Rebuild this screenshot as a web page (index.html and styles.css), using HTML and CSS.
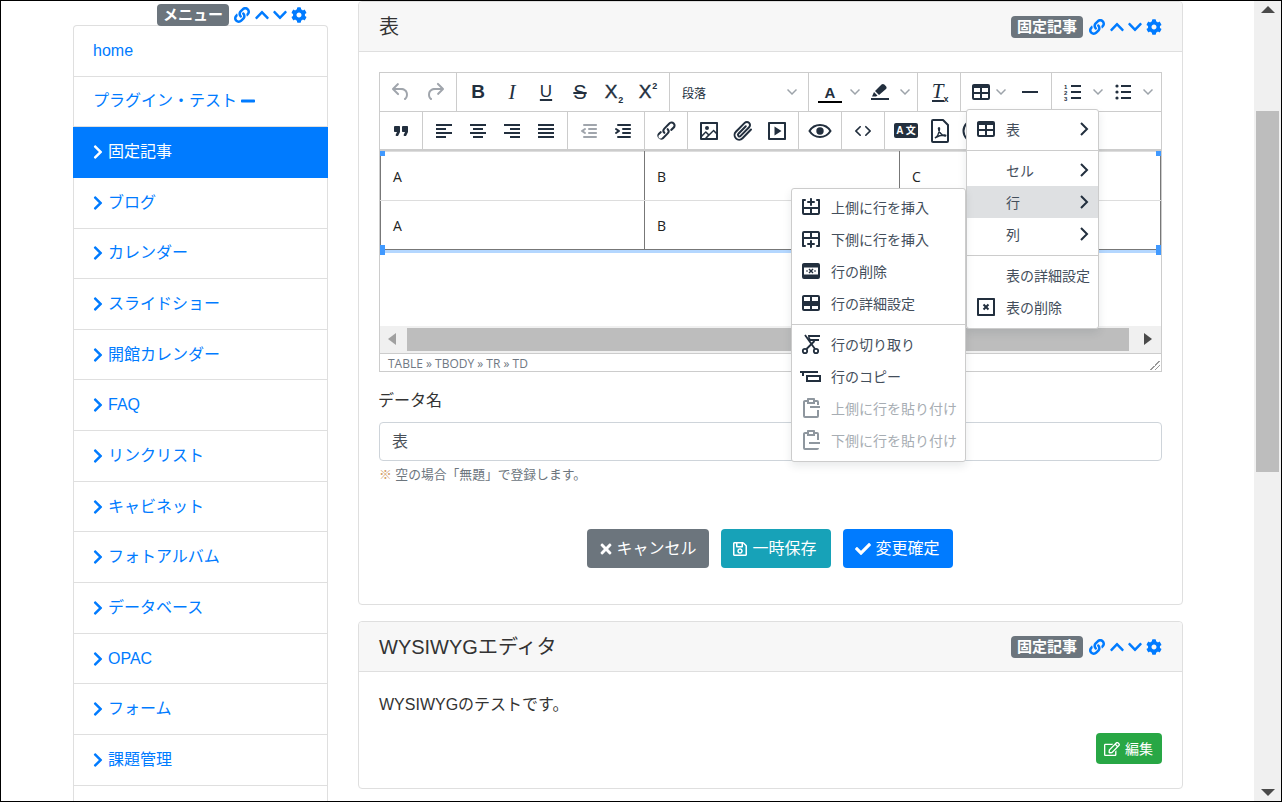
FILE: index.html
```html
<!DOCTYPE html>
<html lang="ja">
<head>
  <meta charset="UTF-8" />
  <title>表</title>
  <link rel="stylesheet" href="styles.css">
</head>
<body>
<svg class="defs" width="0" height="0" aria-hidden="true">
  <defs>
    <symbol id="fa-link" viewBox="0 0 512 512"><path d="M326.612 185.391c59.747 59.809 58.927 155.698.36 214.59-.11.12-.24.25-.36.37l-67.2 67.2c-59.27 59.27-155.699 59.262-214.96 0-59.27-59.26-59.27-155.7 0-214.96l37.106-37.106c9.84-9.84 26.786-3.3 27.294 10.606.648 17.722 3.826 35.527 9.69 52.721 1.986 5.822.567 12.262-3.783 16.612l-13.087 13.087c-28.026 28.026-28.905 73.66-1.155 101.96 28.024 28.579 74.086 28.749 102.325.51l67.2-67.19c28.191-28.191 28.073-73.757 0-101.83-3.701-3.694-7.429-6.564-10.341-8.569a16.037 16.037 0 0 1-6.947-12.606c-.396-10.567 3.348-21.456 11.698-29.806l21.054-21.055c5.521-5.521 14.182-6.199 20.584-1.731a152.482 152.482 0 0 1 20.522 17.197zM467.547 44.449c-59.261-59.262-155.69-59.27-214.96 0l-67.2 67.2c-.12.12-.25.25-.36.37-58.566 58.892-59.387 154.781.36 214.59a152.454 152.454 0 0 0 20.521 17.196c6.402 4.468 15.064 3.789 20.584-1.731l21.054-21.055c8.35-8.35 12.094-19.239 11.698-29.806a16.037 16.037 0 0 0-6.947-12.606c-2.912-2.005-6.64-4.875-10.341-8.569-28.073-28.073-28.191-73.639 0-101.83l67.2-67.19c28.239-28.239 74.3-28.069 102.325.51 27.75 28.3 26.872 73.934-1.155 101.96l-13.087 13.087c-4.35 4.35-5.769 10.79-3.783 16.612 5.864 17.194 9.042 34.999 9.69 52.721.509 13.906 17.454 20.446 27.294 10.606l37.106-37.106c59.271-59.259 59.271-155.699.001-214.959z"/></symbol>
    <symbol id="fa-up" viewBox="0 0 448 512"><path d="M240.971 130.524l194.343 194.343c9.373 9.373 9.373 24.569 0 33.941l-22.667 22.667c-9.357 9.357-24.522 9.375-33.901.04L224 227.495 69.255 381.516c-9.379 9.335-24.544 9.317-33.901-.04l-22.667-22.667c-9.373-9.373-9.373-24.569 0-33.941L207.03 130.525c9.372-9.373 24.568-9.373 33.941-.001z"/></symbol>
    <symbol id="fa-down" viewBox="0 0 448 512"><path d="M207.029 381.476L12.686 187.132c-9.373-9.373-9.373-24.569 0-33.941l22.667-22.667c9.357-9.357 24.522-9.375 33.901-.04L224 284.505l154.745-154.021c9.379-9.335 24.544-9.317 33.901.04l22.667 22.667c9.373 9.373 9.373 24.569 0 33.941L240.971 381.476c-9.373 9.372-24.569 9.372-33.942 0z"/></symbol>
    <symbol id="fa-right" viewBox="0 0 320 512"><path d="M285.476 272.971L91.132 467.314c-9.373 9.373-24.569 9.373-33.941 0l-22.667-22.667c-9.357-9.357-9.375-24.522-.04-33.901L188.505 256 34.484 101.255c-9.335-9.379-9.317-24.544.04-33.901l22.667-22.667c9.373-9.373 24.569-9.373 33.941 0L285.475 239.03c9.373 9.372 9.373 24.568.001 33.941z"/></symbol>
    <symbol id="fa-cog" viewBox="0 0 512 512"><path d="M487.4 315.7l-42.6-24.6c4.3-23.2 4.3-47 0-70.2l42.6-24.6c4.9-2.8 7.1-8.6 5.5-14-11.1-35.6-30-67.8-54.7-94.6-3.8-4.1-10-5.1-14.8-2.3L380.8 110c-17.9-15.4-38.5-27.3-60.8-35.1V25.8c0-5.6-3.9-10.5-9.4-11.7-36.7-8.2-74.3-7.8-109.2 0-5.5 1.2-9.4 6.1-9.4 11.7V75c-22.2 7.9-42.8 19.8-60.8 35.1L88.7 85.5c-4.9-2.8-11-1.9-14.8 2.3-24.7 26.7-43.6 58.9-54.7 94.6-1.7 5.4.6 11.2 5.5 14L67.3 221c-4.3 23.2-4.3 47 0 70.2l-42.6 24.6c-4.9 2.8-7.1 8.6-5.5 14 11.1 35.6 30 67.8 54.7 94.6 3.8 4.1 10 5.1 14.8 2.3l42.6-24.6c17.9 15.4 38.5 27.3 60.8 35.1v49.2c0 5.6 3.9 10.5 9.4 11.7 36.7 8.2 74.3 7.8 109.2 0 5.5-1.2 9.4-6.1 9.4-11.7v-49.2c22.2-7.9 42.8-19.8 60.8-35.1l42.6 24.6c4.9 2.8 11 1.9 14.8-2.3 24.7-26.7 43.6-58.9 54.7-94.6 1.5-5.5-.7-11.3-5.6-14.1zM256 336c-44.1 0-80-35.9-80-80s35.9-80 80-80 80 35.9 80 80-35.9 80-80 80z"/></symbol>
    <symbol id="fa-minus" viewBox="0 0 448 512"><path d="M416 208H32c-17.67 0-32 14.33-32 32v32c0 17.67 14.33 32 32 32h384c17.67 0 32-14.33 32-32v-32c0-17.67-14.33-32-32-32z"/></symbol>
    <symbol id="fa-times" viewBox="0 0 352 512"><path d="M242.72 256l100.07-100.07c12.28-12.28 12.28-32.19 0-44.48l-22.24-22.24c-12.28-12.28-32.19-12.28-44.48 0L176 189.28 75.93 89.21c-12.28-12.28-32.19-12.28-44.48 0L9.21 111.45c-12.28 12.28-12.28 32.19 0 44.48L109.28 256 9.21 356.07c-12.28 12.28-12.28 32.19 0 44.48l22.24 22.24c12.28 12.28 32.2 12.28 44.48 0L176 322.72l100.07 100.07c12.28 12.28 32.2 12.28 44.48 0l22.24-22.24c12.28-12.28 12.28-32.19 0-44.48L242.72 256z"/></symbol>
    <symbol id="fa-check" viewBox="0 0 512 512"><path d="M173.898 439.404l-166.4-166.4c-9.997-9.997-9.997-26.206 0-36.204l36.203-36.204c9.997-9.998 26.207-9.998 36.204 0L192 312.69 432.095 72.596c9.997-9.997 26.207-9.997 36.204 0l36.203 36.204c9.997 9.997 9.997 26.206 0 36.204l-294.4 294.401c-9.998 9.997-26.207 9.997-36.204-.001z"/></symbol>
    <symbol id="fa-save" viewBox="0 0 448 512"><path d="M433.941 129.941l-83.882-83.882A48 48 0 0 0 316.118 32H48C21.49 32 0 53.49 0 80v352c0 26.51 21.49 48 48 48h352c26.51 0 48-21.49 48-48V163.882a48 48 0 0 0-14.059-33.941zM272 80v80H144V80h128zm122 352H54a6 6 0 0 1-6-6V86a6 6 0 0 1 6-6h42v104c0 13.255 10.745 24 24 24h176c13.255 0 24-10.745 24-24V83.882l78.243 78.243a6 6 0 0 1 1.757 4.243V426a6 6 0 0 1-6 6zM224 232c-48.523 0-88 39.477-88 88s39.477 88 88 88 88-39.477 88-88-39.477-88-88-88zm0 128c-22.056 0-40-17.944-40-40s17.944-40 40-40 40 17.944 40 40-17.944 40-40 40z"/></symbol>
    <symbol id="fa-edit" viewBox="0 0 576 512"><path d="M402.3 344.9l32-32c5-5 13.7-1.5 13.7 5.7V464c0 26.5-21.5 48-48 48H48c-26.5 0-48-21.5-48-48V112c0-26.5 21.5-48 48-48h273.5c7.1 0 10.7 8.6 5.7 13.7l-32 32c-1.5 1.5-3.5 2.3-5.7 2.3H48v352h352V350.5c0-2.1.8-4.1 2.3-5.6zm156.6-201.8L296.3 405.7l-90.4 10c-26.2 2.9-48.5-19.2-45.6-45.6l10-90.4L432.9 17.1c22.9-22.9 59.9-22.9 82.7 0l43.2 43.2c22.9 22.9 22.9 60 .1 82.8zM460.1 174L402 115.9 216.2 301.8l-7.3 65.3 65.3-7.3L460.1 174zm64.8-79.7l-43.2-43.2c-4.1-4.1-10.8-4.1-14.8 0L436 82l58.1 58.1 30.9-30.9c4-4.2 4-10.8-.1-14.9z"/></symbol>

    <symbol id="mce-undo" viewBox="0 0 24 24"><path d="M6.4 8H12c3.7 0 6.2 2 6.8 5.1.6 2.7-.4 5.6-2.3 6.8a1 1 0 0 1-1-1.8c1.1-.6 1.8-2.7 1.4-4.6-.5-2.1-2.1-3.5-4.9-3.5H6.4l3.3 3.3a1 1 0 1 1-1.4 1.4l-5-5a1 1 0 0 1 0-1.4l5-5a1 1 0 0 1 1.4 1.4L6.4 8z"/></symbol>
    <symbol id="mce-redo" viewBox="0 0 24 24"><path d="M17.6 10H12c-2.8 0-4.4 1.4-4.9 3.5-.4 2 .3 4 1.4 4.6a1 1 0 1 1-1 1.8c-2-1.2-2.9-4.1-2.3-6.8.6-3 3-5.1 6.8-5.1h5.6l-3.3-3.3a1 1 0 1 1 1.4-1.4l5 5a1 1 0 0 1 0 1.4l-5 5a1 1 0 0 1-1.4-1.4l3.3-3.3z"/></symbol>
    <symbol id="mce-quote" viewBox="0 0 24 24"><path d="M7.5 17h.9c.4 0 .7-.2.9-.6L11 13V8c0-.6-.4-1-1-1H6a1 1 0 0 0-1 1v4c0 .6.4 1 1 1h2l-1.3 2.7a1 1 0 0 0 .8 1.3zm8 0h.9c.4 0 .7-.2.9-.6L19 13V8c0-.6-.4-1-1-1h-4a1 1 0 0 0-1 1v4c0 .6.4 1 1 1h2l-1.3 2.7a1 1 0 0 0 .8 1.3z"/></symbol>
    <symbol id="mce-left" viewBox="0 0 24 24"><path d="M4 5h16v2H4zM4 9h10v2H4zM4 13h16v2H4zM4 17h10v2H4z"/></symbol>
    <symbol id="mce-center" viewBox="0 0 24 24"><path d="M4 5h16v2H4zM7 9h10v2H7zM4 13h16v2H4zM7 17h10v2H7z"/></symbol>
    <symbol id="mce-right" viewBox="0 0 24 24"><path d="M4 5h16v2H4zM10 9h10v2H10zM4 13h16v2H4zM10 17h10v2H10z"/></symbol>
    <symbol id="mce-justify" viewBox="0 0 24 24"><path d="M4 5h16v2H4zM4 9h16v2H4zM4 13h16v2H4zM4 17h16v2H4z"/></symbol>
    <symbol id="mce-outdent" viewBox="0 0 24 24"><path d="M7 5h12c.6 0 1 .4 1 1s-.4 1-1 1H7a1 1 0 1 1 0-2zm5 4h7c.6 0 1 .4 1 1s-.4 1-1 1h-7a1 1 0 0 1 0-2zm0 4h7c.6 0 1 .4 1 1s-.4 1-1 1h-7a1 1 0 0 1 0-2zm-5 4h12a1 1 0 0 1 0 2H7a1 1 0 0 1 0-2zm1.6-3.8a1 1 0 0 1-1.2 1.6l-3-2a1 1 0 0 1 0-1.6l3-2a1 1 0 0 1 1.2 1.6L6.8 12l1.8 1.2z"/></symbol>
    <symbol id="mce-indent" viewBox="0 0 24 24"><path d="M7 5h12c.6 0 1 .4 1 1s-.4 1-1 1H7a1 1 0 1 1 0-2zm5 4h7c.6 0 1 .4 1 1s-.4 1-1 1h-7a1 1 0 0 1 0-2zm0 4h7c.6 0 1 .4 1 1s-.4 1-1 1h-7a1 1 0 0 1 0-2zm-5 4h12a1 1 0 0 1 0 2H7a1 1 0 0 1 0-2zm-2.6-3.8L6.2 12l-1.8-1.2a1 1 0 0 1 1.2-1.6l3 2a1 1 0 0 1 0 1.6l-3 2a1 1 0 1 1-1.2-1.6z"/></symbol>
    <symbol id="mce-link" viewBox="0 0 24 24"><path d="M6.2 12.3a1 1 0 0 1 1.4 1.4l-2.1 2.1a2 2 0 1 0 2.7 2.7l4.8-4.8a2 2 0 0 0 0-2.8 1 1 0 1 1 1.4-1.4 4 4 0 0 1 0 5.6l-4.8 4.8a4 4 0 0 1-5.5-5.6l2.1-2zm11.6-.6a1 1 0 0 1-1.4-1.4l2-2a2 2 0 1 0-2.6-2.8L11 10.3a2 2 0 0 0 0 2.8 1 1 0 1 1-1.4 1.4 4 4 0 0 1 0-5.6l4.8-4.8a4 4 0 1 1 5.6 5.6l-2.1 2z"/></symbol>
    <symbol id="mce-image" viewBox="0 0 24 24"><path fill-rule="evenodd" d="M5 15.7l3.3-3.2c.3-.3.7-.3 1 0L12 15l4.1-4c.3-.4.8-.4 1 0l2 1.9V5H5v10.7zM5 18v1h3l2.8-2.9-2-2L5 18zm14-3l-2.5-2.4-6.4 6.4H19v-4zM4 3h16c.6 0 1 .4 1 1v16c0 .6-.4 1-1 1H4a1 1 0 0 1-1-1V4c0-.6.4-1 1-1zm6 8a2 2 0 1 0 0-4 2 2 0 0 0 0 4z"/></symbol>
    <symbol id="mce-clip" viewBox="0 0 24 24"><path fill="none" stroke="currentColor" stroke-width="2" stroke-linecap="round" d="M20 10.5l-8.500 8.800a4.600 4.600 0 0 1-6.600-6.500l8.800-8.900a3.100 3.100 0 0 1 4.400 4.400l-8.500 8.600a1.500 1.500 0 0 1-2.200-2.100l7.400-7.500"/></symbol>
    <symbol id="mce-media" viewBox="0 0 24 24"><path fill-rule="evenodd" d="M4 3h16c.6 0 1 .4 1 1v16c0 .6-.4 1-1 1H4a1 1 0 0 1-1-1V4c0-.6.4-1 1-1zm1 2v14h14V5H5zm4.500 2.500l7 4.500-7 4.500v-9z"/></symbol>
    <symbol id="mce-eye" viewBox="0 0 24 24"><path fill="none" stroke="currentColor" stroke-width="2" d="M1.500 12C4 8 8 6 12 6s8 2 10.500 6C20 16 16 18 12 18s-8-2-10.500-6z"/><circle cx="12" cy="12" r="3.700"/></symbol>
    <symbol id="mce-code" viewBox="0 0 24 24"><path d="M9.800 15.700c.3.300.3.800 0 1-.3.400-.9.400-1.200 0l-4.400-4.100a.8.800 0 0 1 0-1.200l4.400-4.200c.3-.3.900-.3 1.200 0 .3.300.3.800 0 1.100L6 12l3.800 3.700zM14.200 15.700c-.3.300-.3.800 0 1 .4.400.9.400 1.200 0l4.400-4.100c.3-.3.300-.9 0-1.200l-4.400-4.200a.8.800 0 0 0-1.200 0c-.3.300-.3.800 0 1.100L18 12l-3.800 3.700z"/></symbol>
    <symbol id="mce-pdf" viewBox="0 0 24 24"><path fill="none" stroke="currentColor" stroke-width="2" stroke-linejoin="round" d="M5 1h10l5 5v16a1 1 0 0 1-1 1H5a1 1 0 0 1-1-1V2a1 1 0 0 1 1-1z"/><path fill="none" stroke="currentColor" stroke-width="1.500" d="M7 19c2-1 4-5 4.500-9 .2-1.500-1-1.500-1-.5 0 3 3 7 6.500 7.500 1 .1 1-1 0-1-3-.2-7 1-10 3z"/></symbol>
    <symbol id="mce-circle" viewBox="0 0 24 24"><circle cx="12" cy="12" r="10.500" fill="none" stroke="currentColor" stroke-width="2"/></symbol>
    <symbol id="mce-table" viewBox="0 0 24 24"><path d="M19 4a2 2 0 0 1 2 2v12a2 2 0 0 1-2 2H5a2 2 0 0 1-2-2V6c0-1.100.9-2 2-2h14zM5 14v4h6v-4H5zm14 0h-6v4h6v-4zm0-6h-6v4h6V8zM5 12h6V8H5v4z"/></symbol>
    <symbol id="mce-hr" viewBox="0 0 24 24"><path d="M4 11h16v2H4z"/></symbol>
    <symbol id="mce-bullist" viewBox="0 0 24 24"><path d="M10 5h10v2H10zM10 11h10v2H10zM10 17h10v2H10z"/><circle cx="6" cy="6" r="1.600"/><circle cx="6" cy="12" r="1.600"/><circle cx="6" cy="18" r="1.600"/></symbol>
    <symbol id="mce-numbars" viewBox="0 0 24 24"><path d="M10 5h10v2H10zM10 11h10v2H10zM10 17h10v2H10z"/></symbol>
    <symbol id="mce-marker" viewBox="0 0 24 24"><path d="M3 18h18v2H3zM4 16.500l2-4.500 3.500 3.500-1.500 1zM7 11l6.500-6.500c.8-.8 2-.8 2.800 0l1.700 1.700c.8.800.8 2 0 2.800L11 15z"/></symbol>
    <symbol id="mce-rowabove" viewBox="0 0 24 24"><path d="M6 4a1 1 0 1 1 0 2H5v6h14V6h-1a1 1 0 0 1 0-2h2c.6 0 1 .4 1 1v13a2 2 0 0 1-1.700 2H5a2 2 0 0 1-2-2V5c0-.6.4-1 1-1h2zm5 10H5v4h6v-4zm8 0h-6v4h6v-4zM12 3c.5 0 1 .4 1 .9V6h2a1 1 0 0 1 0 2h-2v2a1 1 0 0 1-2 .1V8H9a1 1 0 0 1 0-2h2V4c0-.6.4-1 1-1z"/></symbol>
    <symbol id="mce-rowbelow" viewBox="0 0 24 24"><path transform="matrix(1 0 0 -1 0 24)" d="M6 4a1 1 0 1 1 0 2H5v6h14V6h-1a1 1 0 0 1 0-2h2c.6 0 1 .4 1 1v13a2 2 0 0 1-1.700 2H5a2 2 0 0 1-2-2V5c0-.6.4-1 1-1h2zm5 10H5v4h6v-4zm8 0h-6v4h6v-4zM12 3c.5 0 1 .4 1 .9V6h2a1 1 0 0 1 0 2h-2v2a1 1 0 0 1-2 .1V8H9a1 1 0 0 1 0-2h2V4c0-.6.4-1 1-1z"/></symbol>
    <symbol id="mce-rowdel" viewBox="0 0 24 24"><path fill-rule="evenodd" d="M5 4h14a2 2 0 0 1 2 2v12a2 2 0 0 1-2 2H5a2 2 0 0 1-2-2V6c0-1.100.9-2 2-2zm0 4.500v7h14v-7H5zm2 3h2v1H7zm8 0h2v1h-2z"/><path d="M10.500 9.500L12 11l1.500-1.500 1 1L13 12l1.500 1.500-1 1L12 13l-1.500 1.500-1-1L11 12l-1.500-1.500z"/></symbol>
    <symbol id="mce-rowprops" viewBox="0 0 24 24"><path fill-rule="evenodd" d="M5 4h14a2 2 0 0 1 2 2v12a2 2 0 0 1-2 2H5a2 2 0 0 1-2-2V6c0-1.100.9-2 2-2zm0 2v4h6V6H5zm8 0v4h6V6h-6zM5 15v3h6v-3H5zm8 0v3h6v-3h-6z"/></symbol>
    <symbol id="mce-cut" viewBox="0 0 24 24"><path d="M9 3h12v2H10.500l1 2H20v2H9.500L9 3z"/><path fill="none" stroke="currentColor" stroke-width="1.800" d="M6 3l10 14M15.500 9L7.500 17"/><circle cx="6" cy="19" r="2.200" fill="none" stroke="currentColor" stroke-width="1.800"/><circle cx="17" cy="19" r="2.200" fill="none" stroke="currentColor" stroke-width="1.800"/></symbol>
    <symbol id="mce-copyrow" viewBox="0 0 24 24"><path fill-rule="evenodd" d="M1 7h18v2H5v3H3V9H1V7zm6 4h15v7H7v-7zm2 2v3h11v-3H9z"/></symbol>
    <symbol id="mce-pasteup" viewBox="0 0 24 24"><path fill-rule="evenodd" d="M9 2h6c.6 0 1 .4 1 1v1h2a2 2 0 0 1 2 2v3h-2V6h-2v2H8V6H6v14h12v-6h2v6a2 2 0 0 1-2 2H6a2 2 0 0 1-2-2V6c0-1.100.9-2 2-2h2V3c0-.6.4-1 1-1zm1 2v2h4V4h-4zM11 10h10v2H11z"/></symbol>
    <symbol id="mce-pastedown" viewBox="0 0 24 24"><path fill-rule="evenodd" d="M9 2h6c.6 0 1 .4 1 1v1h2a2 2 0 0 1 2 2v6h-2V6h-2v2H8V6H6v14h14a2 2 0 0 1-2 2H6a2 2 0 0 1-2-2V6c0-1.100.9-2 2-2h2V3c0-.6.4-1 1-1zm1 2v2h4V4h-4zM10 14h11v2H10z"/></symbol>
    <symbol id="mce-tabledel" viewBox="0 0 24 24"><path fill-rule="evenodd" d="M4 3h16c.6 0 1 .4 1 1v16c0 .6-.4 1-1 1H4a1 1 0 0 1-1-1V4c0-.6.4-1 1-1zm1 2v14h14V5H5zm7 5.600l1.800-1.800 1.400 1.400-1.800 1.800 1.800 1.800-1.400 1.400-1.800-1.800-1.800 1.800-1.400-1.400 1.800-1.800-1.800-1.800 1.400-1.400 1.800 1.800z"/></symbol>
    <symbol id="mce-chev" viewBox="0 0 10 10"><path d="M.5 2.500L5 7l4.500-4.500" fill="none" stroke="currentColor" stroke-width="1.500"/></symbol>
    <symbol id="mce-next" viewBox="0 0 10 16"><path d="M2 2l6 6-6 6" fill="none" stroke="currentColor" stroke-width="2"/></symbol>
  </defs>
</svg>

<div class="window">
  <div class="page">
    <aside class="side">
      <div class="frame-head">
        <span class="badge">メニュー</span>
        <span class="ctrl">
          <svg class="fa c-link"><use href="#fa-link"/></svg>
          <svg class="fa c-up"><use href="#fa-up"/></svg>
          <svg class="fa c-up"><use href="#fa-down"/></svg>
          <svg class="fa c-cog"><use href="#fa-cog"/></svg>
        </span>
      </div>
      <nav class="menu-list">
        <a class="menu-item">home</a>
        <a class="menu-item">プラグイン・テスト<svg class="fa minus"><use href="#fa-minus"/></svg></a>
        <a class="menu-item active"><svg class="fa chev"><use href="#fa-right"/></svg>固定記事</a>
        <a class="menu-item"><svg class="fa chev"><use href="#fa-right"/></svg>ブログ</a>
        <a class="menu-item"><svg class="fa chev"><use href="#fa-right"/></svg>カレンダー</a>
        <a class="menu-item"><svg class="fa chev"><use href="#fa-right"/></svg>スライドショー</a>
        <a class="menu-item"><svg class="fa chev"><use href="#fa-right"/></svg>開館カレンダー</a>
        <a class="menu-item"><svg class="fa chev"><use href="#fa-right"/></svg>FAQ</a>
        <a class="menu-item"><svg class="fa chev"><use href="#fa-right"/></svg>リンクリスト</a>
        <a class="menu-item"><svg class="fa chev"><use href="#fa-right"/></svg>キャビネット</a>
        <a class="menu-item"><svg class="fa chev"><use href="#fa-right"/></svg>フォトアルバム</a>
        <a class="menu-item"><svg class="fa chev"><use href="#fa-right"/></svg>データベース</a>
        <a class="menu-item"><svg class="fa chev"><use href="#fa-right"/></svg>OPAC</a>
        <a class="menu-item"><svg class="fa chev"><use href="#fa-right"/></svg>フォーム</a>
        <a class="menu-item"><svg class="fa chev"><use href="#fa-right"/></svg>課題管理</a>
        <a class="menu-item"></a>
      </nav>
    </aside>

    <main class="content">
      <section class="card first">
        <header class="card-head">
          <h5>表</h5>
          <span class="badge">固定記事</span>
          <span class="ctrl">
            <svg class="fa c-link"><use href="#fa-link"/></svg>
            <svg class="fa c-up"><use href="#fa-up"/></svg>
            <svg class="fa c-up"><use href="#fa-down"/></svg>
            <svg class="fa c-cog"><use href="#fa-cog"/></svg>
          </span>
        </header>
        <div class="card-body">
          <div class="editor">
            <div class="tb-row">
              <div class="tb-group">
                <span class="tb off"><svg><use href="#mce-undo"/></svg></span>
                <span class="tb off"><svg><use href="#mce-redo"/></svg></span>
              </div>
              <div class="tb-group">
                <span class="tb"><b class="g-b">B</b></span>
                <span class="tb"><i class="g-i">I</i></span>
                <span class="tb"><u class="g-u">U</u></span>
                <span class="tb"><s class="g-s">S</s></span>
                <span class="tb"><span class="g-x">X<sub>2</sub></span></span>
                <span class="tb"><span class="g-x">X<sup>2</sup></span></span>
              </div>
              <div class="tb-group">
                <span class="tb-select">段落<svg class="arrow"><use href="#mce-chev"/></svg></span>
              </div>
              <div class="tb-group">
                <span class="tb split"><span class="g-color">A</span><svg class="arrow"><use href="#mce-chev"/></svg></span>
                <span class="tb split"><svg><use href="#mce-marker"/></svg><svg class="arrow"><use href="#mce-chev"/></svg></span>
              </div>
              <div class="tb-group">
                <span class="tb"><span class="g-clear">T<small>x</small></span></span>
              </div>
              <div class="tb-group">
                <span class="tb split narrow"><svg><use href="#mce-table"/></svg><svg class="arrow"><use href="#mce-chev"/></svg></span>
                <span class="tb"><svg><use href="#mce-hr"/></svg></span>
              </div>
              <div class="tb-group last">
                <span class="tb split"><span class="g-num"><svg><use href="#mce-numbars"/></svg><small>1<br>2<br>3</small></span><svg class="arrow"><use href="#mce-chev"/></svg></span>
                <span class="tb split"><svg><use href="#mce-bullist"/></svg><svg class="arrow"><use href="#mce-chev"/></svg></span>
              </div>
            </div>
            <div class="tb-row second">
              <div class="tb-group">
                <span class="tb"><svg><use href="#mce-quote"/></svg></span>
              </div>
              <div class="tb-group">
                <span class="tb"><svg><use href="#mce-left"/></svg></span>
                <span class="tb"><svg><use href="#mce-center"/></svg></span>
                <span class="tb"><svg><use href="#mce-right"/></svg></span>
                <span class="tb"><svg><use href="#mce-justify"/></svg></span>
              </div>
              <div class="tb-group">
                <span class="tb off"><svg><use href="#mce-outdent"/></svg></span>
                <span class="tb"><svg><use href="#mce-indent"/></svg></span>
              </div>
              <div class="tb-group">
                <span class="tb"><svg><use href="#mce-link"/></svg></span>
              </div>
              <div class="tb-group">
                <span class="tb"><svg><use href="#mce-image"/></svg></span>
                <span class="tb"><svg><use href="#mce-clip"/></svg></span>
                <span class="tb"><svg><use href="#mce-media"/></svg></span>
              </div>
              <div class="tb-group">
                <span class="tb"><svg><use href="#mce-eye"/></svg></span>
              </div>
              <div class="tb-group">
                <span class="tb"><svg><use href="#mce-code"/></svg></span>
              </div>
              <div class="tb-group last">
                <span class="tb"><span class="g-trans">A 文</span></span>
                <span class="tb"><svg><use href="#mce-pdf"/></svg></span>
                <span class="tb"><svg><use href="#mce-circle"/></svg></span>
              </div>
            </div>

            <div class="edit-area">
              <table class="edit-table">
                <tr><td>A</td><td>B</td><td>C</td></tr>
                <tr><td>A</td><td>B</td><td></td></tr>
              </table>
              <div class="table-sel"></div>
              <span class="handle tl"></span>
              <span class="handle tr"></span>
              <span class="handle bl"></span>
              <span class="handle br"></span>
            </div>
            <div class="hscroll">
              <span class="tri-left"></span>
              <span class="hthumb"></span>
              <span class="tri-right"></span>
            </div>
            <div class="statusbar">
              <span>TABLE » TBODY » TR » TD</span>
              <span class="grip"></span>
            </div>
          </div>

          <label class="field-label">データ名</label>
          <div class="field-input">表</div>
          <p class="field-note"><span class="mark">※</span> 空の場合「無題」で登録します。</p>

          <div class="actions">
            <a class="btn gray"><svg class="fa"><use href="#fa-times"/></svg>キャンセル</a>
            <a class="btn teal"><svg class="fa"><use href="#fa-save"/></svg>一時保存</a>
            <a class="btn blue"><svg class="fa"><use href="#fa-check"/></svg>変更確定</a>
          </div>
        </div>
      </section>

      <section class="card second">
        <header class="card-head">
          <h5>WYSIWYGエディタ</h5>
          <span class="badge">固定記事</span>
          <span class="ctrl">
            <svg class="fa c-link"><use href="#fa-link"/></svg>
            <svg class="fa c-up"><use href="#fa-up"/></svg>
            <svg class="fa c-up"><use href="#fa-down"/></svg>
            <svg class="fa c-cog"><use href="#fa-cog"/></svg>
          </span>
        </header>
        <div class="card-body small">
          <p class="wys">WYSIWYGのテストです。</p>
          <div class="edit-row"><a class="btn green"><svg class="fa"><use href="#fa-edit"/></svg>編集</a></div>
        </div>
      </section>
    </main>
  </div>

  <div class="vscroll">
    <span class="tri-up"></span>
    <span class="vthumb"></span>
    <span class="tri-down"></span>
  </div>

  <!-- table dropdown, open on 行 -->
  <div class="mce-menu table-menu">
    <div class="mi"><svg class="mi-ico"><use href="#mce-table"/></svg>表<svg class="mi-next"><use href="#mce-next"/></svg></div>
    <hr>
    <div class="mi"><span class="mi-ico"></span>セル<svg class="mi-next"><use href="#mce-next"/></svg></div>
    <div class="mi on"><span class="mi-ico"></span>行<svg class="mi-next"><use href="#mce-next"/></svg></div>
    <div class="mi"><span class="mi-ico"></span>列<svg class="mi-next"><use href="#mce-next"/></svg></div>
    <hr>
    <div class="mi"><span class="mi-ico"></span>表の詳細設定</div>
    <div class="mi"><svg class="mi-ico"><use href="#mce-tabledel"/></svg>表の削除</div>
  </div>
  <div class="mce-menu row-menu">
    <div class="mi"><svg class="mi-ico"><use href="#mce-rowabove"/></svg>上側に行を挿入</div>
    <div class="mi"><svg class="mi-ico"><use href="#mce-rowbelow"/></svg>下側に行を挿入</div>
    <div class="mi"><svg class="mi-ico"><use href="#mce-rowdel"/></svg>行の削除</div>
    <div class="mi"><svg class="mi-ico"><use href="#mce-rowprops"/></svg>行の詳細設定</div>
    <hr>
    <div class="mi"><svg class="mi-ico"><use href="#mce-cut"/></svg>行の切り取り</div>
    <div class="mi"><svg class="mi-ico"><use href="#mce-copyrow"/></svg>行のコピー</div>
    <div class="mi off"><svg class="mi-ico"><use href="#mce-pasteup"/></svg>上側に行を貼り付け</div>
    <div class="mi off"><svg class="mi-ico"><use href="#mce-pastedown"/></svg>下側に行を貼り付け</div>
  </div>
</div>
</body>
</html>
```

FILE: styles.css
```css
* {
  box-sizing: border-box;
}
html, body {
  margin: 0;
  padding: 0;
  overflow: hidden;
}
body {
  font-family: "Liberation Sans", "Noto Sans CJK JP", sans-serif;
  font-size: 16px;
  color: #333;
  background: #fff;
}
.defs {
  position: absolute;
}
.window {
  position: relative;
  width: 1282px;
  height: 802px;
  border: 1px solid #000;
  display: flex;
  overflow: hidden;
}
.page {
  flex: 1;
  min-width: 0;
  display: flex;
  gap: 30px;
  padding-left: 72px;
}
.fa {
  fill: #007bff;
  display: inline-block;
}

/* frame header (badge + controls) */
.badge {
  display: inline-block;
  background: #6c757d;
  color: #fff;
  font-size: 15px;
  font-weight: 700;
  line-height: 15px;
  height: 22px;
  padding: 3px 6px;
  border-radius: 4px;
  white-space: nowrap;
}
.ctrl {
  display: inline-flex;
  align-items: center;
  gap: 4px;
  margin-left: 6px;
}
.ctrl svg {
  height: 16px;
}
.c-link {
  width: 16px;
  margin-right: 1px;
}
.c-up {
  width: 14px;
}
.c-cog {
  width: 16px;
}

/* left menu */
.side {
  width: 255px;
  flex: none;
}
.frame-head {
  height: 24px;
  padding: 3px 21px 0 0;
  display: flex;
  justify-content: flex-end;
  align-items: flex-start;
}
.frame-head .ctrl {
  height: 22px;
  margin-left: 5px;
}
.menu-list {
  border: 1px solid #dfdfdf;
  border-bottom: 0;
  border-radius: 4px 4px 0 0;
}
.menu-item {
  display: flex;
  align-items: center;
  height: 50.65px;
  padding: 0 19px;
  color: #007bff;
  border-bottom: 1px solid #dfdfdf;
  line-height: 24px;
}
.menu-item.active {
  background: #007bff;
  color: #fff;
  margin: 0 -1px;
  padding: 0 20px;
  border-bottom-color: #007bff;
}
.menu-item.active .fa {
  fill: #fff;
}
.chev {
  width: 10px;
  height: 16px;
  margin-right: 5px;
}
.minus {
  width: 14px;
  height: 16px;
  margin-left: 4px;
}

/* cards */
.content {
  width: 825px;
  flex: none;
}
.card {
  border: 1px solid #dfdfdf;
  border-radius: 4px;
  background: #fff;
}
.card.first {
  height: 604px;
  margin-bottom: 16px;
}
.card.second {
  height: 168px;
}
.card-head {
  height: 50px;
  padding: 0 20px;
  background: #f7f7f7;
  border-bottom: 1px solid #dfdfdf;
  display: flex;
  align-items: center;
  border-radius: 4px 4px 0 0;
}
.card-head h5 {
  margin: 0 auto 3px 0;
  font-size: 20px;
  font-weight: 400;
  color: #333;
}
.card-body {
  padding: 20px 20px 0;
}
.card-body.small {
  padding-top: 21px;
}

/* editor */
.editor {
  border: 1px solid #ccc;
  height: 300px;
  display: flex;
  flex-direction: column;
  overflow: hidden;
  width: 783px;
}
.tb-row {
  display: flex;
  height: 39px;
  flex: none;
  border-bottom: 1px solid #ccc;
}
.tb-row.second {
  border-bottom: 2px solid #ccc;
}
.tb-group {
  display: flex;
  align-items: center;
  padding: 0 4px;
  border-right: 1px solid #ccc;
  height: 38px;
  flex: none;
  width: fit-content;
}
.tb-row.second .tb-group {
  height: 37px;
}
.tb-group.last {
  border-right: 0;
}
.tb {
  width: 34px;
  height: 34px;
  display: flex;
  align-items: center;
  justify-content: center;
  color: #222f3e;
  flex: none;
}
.tb svg {
  width: 24px;
  height: 24px;
  fill: #222f3e;
  flex: none;
}
.tb.off svg {
  fill: #a0a5ac;
  color: #a0a5ac;
}
.tb.split {
  width: 50px;
  justify-content: flex-start;
  padding-left: 5px;
}
.tb.split.narrow {
  width: 48px;
  padding-left: 4px;
}
.tb .arrow,
.tb-select .arrow {
  width: 10px;
  height: 10px;
  margin-left: 8px;
  color: #9da3aa;
  fill: none;
}
.tb.split.narrow .arrow {
  margin-left: 3px;
}
.tb-select {
  width: 130px;
  height: 34px;
  display: flex;
  align-items: center;
  justify-content: space-between;
  padding: 0 7px 0 8px;
  font-size: 12px;
  color: #222f3e;
}
.g-b {
  font: 700 19px "Liberation Sans", sans-serif;
}
.g-i {
  font: italic 400 21px "Liberation Serif", serif;
}
.g-u {
  font: 400 17px "Liberation Sans", sans-serif;
  text-underline-offset: 2px;
  text-decoration-thickness: 2px;
}
.g-s {
  font: 400 20px "Liberation Sans", sans-serif;
  padding: 0 2px;
  text-decoration-thickness: 2px;
}
.g-x {
  font: 400 19px "Liberation Sans", sans-serif;
  -webkit-text-stroke: .4px #222f3e;
  display: inline-flex;
}
.g-x sub, .g-x sup {
  font-size: 9px;
  font-weight: 700;
  line-height: 10px;
  margin-left: 1px;
  -webkit-text-stroke: 0;
}
.g-x sub {
  align-self: flex-end;
  margin-bottom: -2px;
}
.g-x sup {
  align-self: flex-start;
}
.g-color {
  width: 24px;
  border-bottom: 2px solid #000;
  text-align: center;
  font: 700 15px/17px "Liberation Sans", sans-serif;
  margin-top: 2px;
  flex: none;
}
.g-clear {
  font: italic 400 21px/17px "Liberation Serif", serif;
  border-bottom: 2px solid #222f3e;
  width: 12px;
  margin-right: 3px;
  text-align: center;
  position: relative;
}
.g-clear small {
  position: absolute;
  left: 12px;
  bottom: -4px;
  font: 700 9px "Liberation Sans", sans-serif;
}
.g-num {
  position: relative;
  width: 24px;
  height: 24px;
  flex: none;
}
.g-num small {
  position: absolute;
  left: 3px;
  top: 4px;
  font: 700 6px/6px "Liberation Sans", sans-serif;
}
.g-trans {
  width: 24px;
  height: 15px;
  background: #222f3e;
  color: #fff;
  border-radius: 2px;
  font-size: 10px;
  font-weight: 700;
  line-height: 15px;
  text-align: center;
  white-space: nowrap;
}

.edit-area {
  position: relative;
  height: 175px;
  flex: none;
}
.edit-table {
  border-collapse: collapse;
  table-layout: fixed;
  width: 781px;
  font-family: "Open Sans", sans-serif;
  font-size: 14px;
  color: #222;
}
.edit-table td {
  height: 49px;
  padding: 0 12px;
  border: 1px solid #ddd;
  border-left: 1px solid #777;
  border-right: 1px solid #777;
}
.edit-table tr:last-child td {
  border-bottom: 1px solid #777;
}
.edit-table td:nth-child(1) {
  width: 264px;
}
.edit-table td:nth-child(2) {
  width: 255px;
}
.table-sel {
  height: 3px;
  background: #b4d7ff;
  width: 781px;
}
.handle {
  position: absolute;
  background: #4099ff;
  width: 5px;
}
.handle.tl, .handle.tr {
  top: 0;
  height: 5px;
}
.handle.bl, .handle.br {
  top: 94px;
  height: 10px;
}
.handle.tl, .handle.bl {
  left: 0;
}
.handle.tr, .handle.br {
  right: 0;
}
.hscroll {
  height: 28px;
  flex: none;
  background: #f0f0f0;
  border-bottom: 1px solid #ccc;
  position: relative;
  display: flex;
  align-items: center;
  padding: 0 32px 0 27px;
}
.hthumb {
  flex: 1;
  height: 23px;
  background: #bdbdbd;
}
.tri-left, .tri-right {
  position: absolute;
  top: 7px;
  border: 6px solid transparent;
  border-left-width: 0;
  border-right: 8px solid #a0a0a0;
  left: 8px;
}
.tri-right {
  left: auto;
  right: 9px;
  border-right-width: 0;
  border-left: 8px solid #4a4a4a;
  border-left-width: 8px;
}
.statusbar {
  flex: 1;
  display: flex;
  align-items: center;
  padding: 3px 0 0 8px;
  font-family: "Open Sans", sans-serif;
  font-size: 12px;
  color: #6f7883;
  position: relative;
  line-height: 1;
}
.grip {
  position: absolute;
  right: 1px;
  bottom: 1px;
  width: 10px;
  height: 10px;
  background: linear-gradient(135deg, transparent 50%, #999 50%, #999 58%, transparent 58%, transparent 72%, #999 72%, #999 80%, transparent 80%);
}

/* form */
.field-label {
  display: block;
  margin: 17px 0 0 -1px;
  line-height: 24px;
  color: #333;
}
.field-input {
  width: 783px;
  height: 39px;
  margin-top: 9px;
  padding: 0 12px;
  border: 1px solid #ced4da;
  border-radius: 4px;
  line-height: 37px;
  color: #495057;
}
.field-note {
  margin: 4px 0 0;
  font-size: 12.8px;
  line-height: 19px;
  color: #6c757d;
}
.mark {
  color: #d39e6a;
}
.actions {
  display: flex;
  justify-content: center;
  gap: 12px;
  margin: 45px 1px 0 0;
}
.btn {
  display: inline-flex;
  align-items: center;
  height: 39px;
  padding: 0 12px 3px;
  border-radius: 4px;
  color: #fff;
}
.btn .fa {
  fill: #fff;
  height: 16px;
  flex: none;
  margin-top: 3px;
}
.btn.gray {
  background: #6c757d;
  padding-right: 13px;
}
.btn.gray .fa {
  width: 14px;
  margin-right: 3px;
}
.btn.teal {
  background: #17a2b8;
  padding-right: 14px;
}
.btn.teal .fa {
  width: 14px;
  margin-right: 5px;
}
.btn.blue {
  background: #007bff;
  padding-right: 13px;
}
.btn.blue .fa {
  width: 16px;
  margin-right: 5px;
}
.btn.green {
  background: #28a745;
  height: 31px;
  font-size: 14px;
  padding: 0 9px 2px 8px;
}
.btn.green .fa {
  width: 16px;
  margin: 2px 5px 0 0;
}
.wys {
  margin: 0;
  line-height: 24px;
  color: #333;
}
.edit-row {
  display: flex;
  justify-content: flex-end;
  margin-top: 16px;
}

/* window scrollbar */
.vscroll {
  width: 27px;
  flex: none;
  background: #f0f0f0;
  position: relative;
  display: flex;
  flex-direction: column;
  align-items: center;
}
.vthumb {
  position: absolute;
  top: 110px;
  left: 2px;
  width: 23px;
  height: 361px;
  background: #bdbdbd;
}
.tri-up, .tri-down {
  position: absolute;
  border: 7px solid transparent;
  left: 7px;
}
.tri-up {
  top: 5px;
  border-top-width: 0;
  border-bottom: 7px solid #4a4a4a;
}
.tri-down {
  bottom: 5px;
  border-bottom-width: 0;
  border-top: 7px solid #4a4a4a;
}

/* tinymce menus */
.mce-menu {
  position: absolute;
  background: #fff;
  border: 1px solid #ccc;
  border-radius: 3px;
  box-shadow: 0 4px 8px rgba(34, 47, 62, .1);
  font-size: 14px;
  color: #434e5b;
}
.table-menu {
  left: 965px;
  top: 108px;
  width: 133px;
  padding: 3px 0 5px;
}
.row-menu {
  left: 790px;
  top: 187px;
  width: 175px;
  padding: 2px 0 5px;
}
.mce-menu hr {
  margin: 5px 0 3px;
  border: 0;
  border-top: 1px solid #ccc;
}
.mi {
  height: 32px;
  display: flex;
  align-items: center;
  padding: 0 9px 1px 7px;
  white-space: nowrap;
}
.mi.on {
  background: #dee0e2;
}
.mi.off {
  color: #a7adb3;
}
.mi-ico {
  width: 24px;
  height: 24px;
  margin-right: 8px;
  fill: #222f3e;
  color: #222f3e;
  flex: none;
}
.mi.off .mi-ico {
  fill: #8f979f;
}
.mi-next {
  width: 10px;
  height: 16px;
  margin-left: auto;
  color: #222f3e;
  fill: none;
}
```
